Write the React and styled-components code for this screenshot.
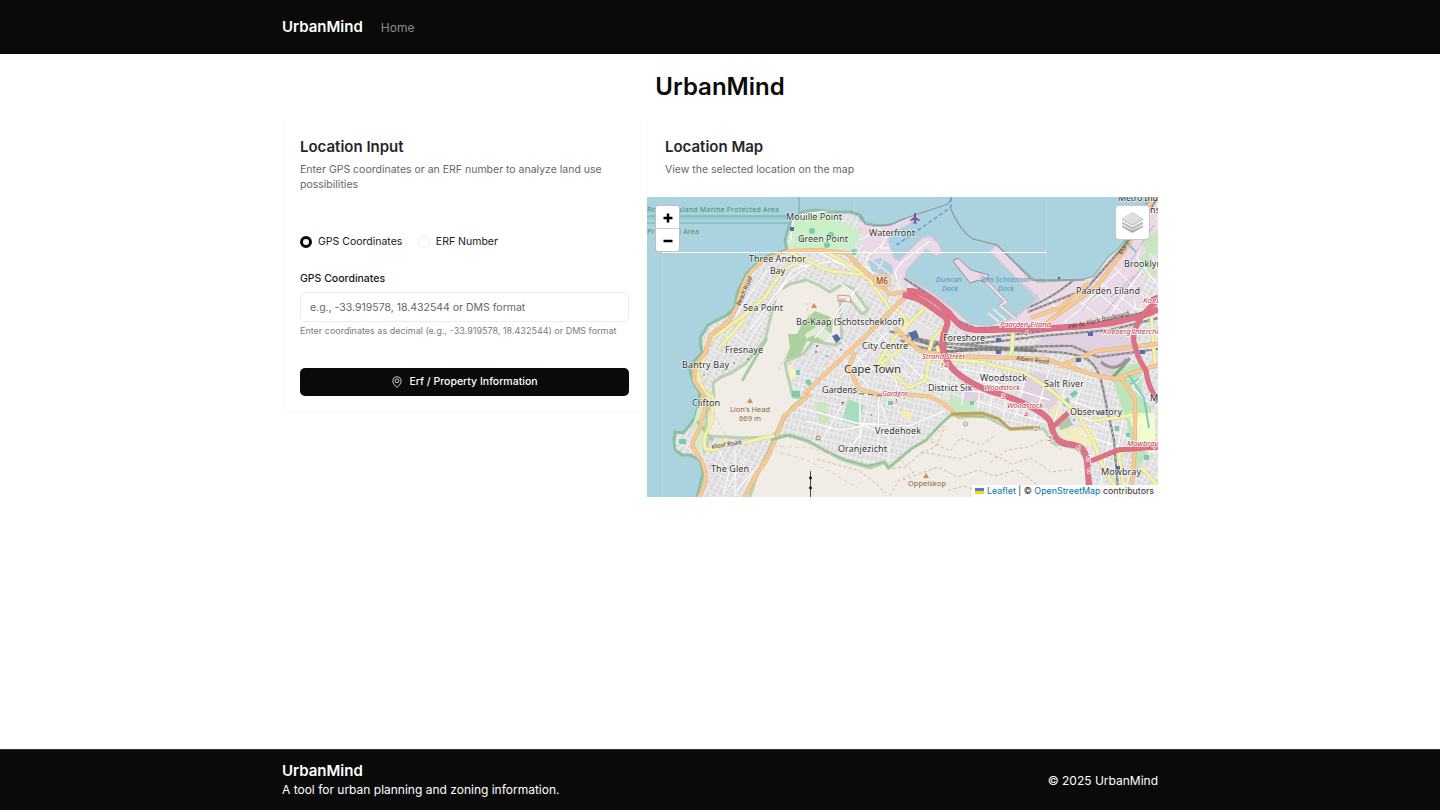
import React from "react";
import styled, { createGlobalStyle } from "styled-components";

const Global = createGlobalStyle`
  * { box-sizing: border-box; }
  body { margin: 0; background: #fff; color: #0a0a0a; font-family: Inter, "Liberation Sans", sans-serif; }
  h1, h2, p { margin: 0; }
`;
const Page = styled.div`
  display: flex;
  flex-direction: column;
  height: 810px;
`;
const Container = styled.div`
  width: 876px;
  margin: 0 auto;
  display: flex;
  align-items: center;
  justify-content: ${(p) => p.$justify || "flex-start"};
`;
const Header = styled.header`
  height: 54px;
  display: flex;
  background: #0a0a0a;
`;
const Brand = styled.div`
  font-size: 15px;
  line-height: 20px;
  font-weight: 600;
  color: #fff;
`;
const NavLink = styled.a`
  margin: 2px 0 0 18px;
  font-size: 12px;
  line-height: 18px;
  color: #8b8b8b;
`;
const Main = styled.main`
  flex: 1;
  width: 876px;
  margin: 0 auto;
  padding-top: 15px;
`;
const PageTitle = styled.h1`
  font-size: 24px;
  line-height: 36px;
  font-weight: 600;
  text-align: center;
  margin-bottom: 14px;
`;
const Columns = styled.div`
  display: grid;
  grid-template-columns: 365px 511px;
  align-items: start;
`;
const Card = styled.section`
  border: ${(p) => (p.$outlined ? "1px solid #fafafa" : "0")};
  border-top-color: #fff;
  border-radius: 8px 0 0 8px;
  height: ${(p) => (p.$outlined ? "294px" : "auto")};
`;
const CardHeader = styled.div`
  padding: ${(p) => (p.$inset ? "16px 17px 0 17px" : "17px 18px 0")};
  height: ${(p) => (p.$inset ? "77px" : "78px")};
`;
const CardTitle = styled.h2`
  font-size: 15px;
  line-height: 22px;
  font-weight: 600;
  color: #262626;
  margin-bottom: 4px;
`;
const CardText = styled.p`
  font-size: 10.5px;
  line-height: 15px;
  color: #666;
`;
const Form = styled.div`
  display: flex;
  flex-direction: column;
  padding: 37px 17px 0 17px;
`;
const Radios = styled.div`
  display: flex;
  gap: 15.5px;
  height: 15px;
`;
const RadioOption = styled.label`
  display: flex;
  align-items: center;
  gap: 6px;
  font-size: 10.5px;
  color: #171717;
`;
const RadioDot = styled.span`
  width: 12px;
  height: 12px;
  border-radius: 50%;
  border: ${(p) => (p.$checked ? "3.5px solid #0a0a0a" : "1px solid #ededed")};
`;
const FieldLabel = styled.label`
  margin-top: 22px;
  font-size: 10.5px;
  line-height: 15px;
  font-weight: 500;
  color: #171717;
`;
const Input = styled.input`
  margin-top: 6px;
  height: 30px;
  padding: 0 9px;
  border: 1px solid #ececec;
  border-radius: 5px;
  outline: 0;
  font: 10.5px Inter, sans-serif;
  &::placeholder { color: #666; opacity: 1; }
`;
const Hint = styled.p`
  margin-top: 3px;
  font-size: 9px;
  line-height: 12px;
  color: #7c7c7c;
  white-space: nowrap;
`;
const Button = styled.button`
  margin-top: 30.5px;
  height: 28px;
  display: flex;
  align-items: center;
  justify-content: center;
  gap: 6px;
  border: 0;
  border-radius: 5px;
  background: #0a0a0a;
  color: #fff;
  font: 500 10.5px Inter, sans-serif;
`;
const MapFrame = styled.div`
  position: relative;
  width: 511px;
  height: 300px;
  overflow: hidden;
`;
const MapDrawing = styled.svg`
  display: block;
  width: 511px;
  height: 300px;
  font-family: "Noto Sans", sans-serif;
`;
const ZoomControl = styled.div`
  position: absolute;
  left: 8px;
  top: 8px;
  width: 25px;
  height: 47px;
  border: 1px solid rgba(0, 0, 0, 0.25);
  border-radius: 3px;
  background: #fff;
  display: flex;
  flex-direction: column;
`;
const ZoomButton = styled.div`
  flex: 1;
  display: flex;
  align-items: center;
  justify-content: center;
  padding-top: 2px;
  & + & { border-top: 1px solid #ccc; }
`;
const LayersControl = styled.div`
  position: absolute;
  right: 8px;
  top: 8px;
  width: 35px;
  height: 35px;
  display: flex;
  align-items: center;
  justify-content: center;
  border: 1px solid rgba(0, 0, 0, 0.22);
  border-radius: 4px;
  background: #fff;
`;
const Attribution = styled.div`
  position: absolute;
  right: 0;
  bottom: 0;
  height: 12px;
  padding: 0 4px 1px 3px;
  display: flex;
  align-items: center;
  background: rgba(255, 255, 255, 0.85);
  color: #333;
  font-size: 8.9px;
  white-space: pre;
  svg { margin-right: 3px; }
  a { color: #0078a8; }
`;
const Footer = styled.footer`
  height: 61px;
  display: flex;
  border-top: 1px solid #333;
  background: #0a0a0a;
  color: #fff;
  font-size: 12px;
`;
const FooterText = styled.p`
  line-height: 18px;
  padding-top: ${(p) => (p.$lowered ? "2px" : "0")};
`;

const COAST =
  "M697 505L697 497 703 473 700 460 690 455 682 455 675 450 674 441 675 432 683 433 690 425 695 417 698 407 700 393 693 382 690 370 695 360 702 353 700 338 708 325 727 315 735 308 737 293 747 273 763 258 787 250 785 240 790 223 802 212 815 210 830 212 850 212 859 215 863 222 873 225 885 226 893 224 905 219 917 217 906 225 893 232 887 240 893 258 899 262 911 250 922 239 930 237 938 244 941 253 937 255 926 248 906 269 904 277 913 283 930 292 957 313 970 325 988 327 1015 319 1038 299 991 251 997 246 1017 265 1035 281 1060 281 1083 280 1094 277 1108 258 1120 248 1128 238 1136 224 1147 203 1150 197 1150 190H1166V505Z";
const HARBOUR_EDGE =
  "M905 219L917 217 906 225 893 232 887 240 893 258 899 262 911 250 922 239 930 237 938 244 941 253 937 255 926 248 906 269 904 277 913 283 930 292 957 313 970 325 988 327 1015 319 1038 299 991 251 997 246";

const HILLS = [
  "M770 320L777 292 790 284 807 280 820 286 830 292 843 284 853 289 868 310 862 314 850 300 840 300 842 342 835 345 813 341 803 354 785 362 787 373 793 397 804 398 792 407 781 424 773 437 743 438 710 436 704 451 707 412 714 398 713 383 721 377 731 373 745 364 765 340Z",
  "M774 438L785 435 804 440 822 449 840 459 870 468 885 462 889 468 911 449 925 441 941 424 952 414 971 414 984 416 1010 429 1044 429 1053 443 1079 449 1087 463 1087 505H747L756 478Z",
];
const FOREST = "M797 334L803 322 815 311 833 318 832 332 822 343 807 341 800 355 785 360 790 347 788 334Z";

const PARKS = [
  ["#caf0c6", "M793 221L808 213 827 213 845 224 861 234 854 249 821 250 790 248Z"],
  ["#a6dfbf", "M848 399L864 405 858 426 842 421Z"],
  ["#f5f3c4", "M782 363L793 367 797 377 789 380Z"],
  ["#c8e8c4", "M950 393L971 403 979 415 960 414 950 407Z"],
  ["#bee5ba", "M1110 370L1142 362 1142 399 1151 406 1151 448 1136 471 1130 447 1127 421 1113 382Z"],
  ["#f3ffc9", "M1128 413L1155 413 1155 454 1140 450Z"],
  ["#f2eec2", "M1056 431L1079 427 1091 428 1100 441 1091 447 1070 441Z"],
  ["#efe8ba", "M1051 407L1060 404 1061 418 1050 420Z"],
  ["#b2c7a9", "M1058 425L1068 416 1073 425 1061 430Z"],
  ["#c9e6bd", "M815 403L826 402 829 421 820 427Z"],
  ["#f7ecb5", "M904 410L913 413 909 421 900 415Z"],
  ["#f7ecb5", "M1071 452L1080 454 1084 462 1078 464Z"],
  ["#c8e7be", "M1142 241L1158 230V255L1148 252 1158 278 1145 274 1137 262 1146 251Z"],
  ["#d9eac8", "M696 408L709 408 708 437 698 453 692 437Z"],
];

const MINOR =
  "M750 330L793 270 820 260 M745 349L785 283 809 265 M736 315L767 270 M732 330L746 344 M777 258L804 266 834 261 865 274 M820 253L868 276 874 290 M858 214L888 235 881 246 867 257 866 266 878 279 M880 248L900 248 M861 240L881 226 M900 290L895 272 902 262 930 241 M857 288L815 338 M839 282L854 293 836 320 M840 339L865 365 895 378 900 397 M834 347L868 386 866 405 M871 337L911 380 M875 329L935 391 M850 353L881 323 M840 378L892 328 M891 307L938 333 M860 391L860 448 M879 391L878 445 M798 407L856 423 909 426 944 411 M806 421L840 430 866 426 888 436 M822 440L846 398 M889 462L889 430 881 403 M850 449L861 433 865 418 M922 375L961 390 988 393 1020 404 M939 366L1017 378 M950 347L944 392 M967 351L962 405 M983 357L978 408 M998 359L989 417 M1010 361L1003 421 M1030 359L1015 418 M1050 367L1034 421 M1070 372L1053 425 M1086 377L1075 405 M962 378L1005 386 1050 400 M976 401L1020 415 1047 423 M1056 395L1112 416 M1080 416L1130 439 M1080 433L1133 452 M1094 452L1080 493 M1110 433L1100 488 M1124 415L1114 469 M1141 424L1129 479 M1143 376L1132 387 1148 402 M1046 291L1049 298 1055 307 1075 299 1109 288 M1077 300L1112 326 M1092 288L1124 314 M1095 278L1137 310 M1110 263L1146 299 M1141 245L1137 258 1158 286 M1134 299L1136 309 1151 309 M1083 304L1121 269 M1111 314L1143 269 M1062 324L1105 290 M719 450L729 473 723 495 M735 450L735 496 M746 458L728 487 M758 466L736 491 M792 223L796 216 840 209 M790 245L793 223";

const TRUNK = [
  "M907 291C924 290 937 302 949 313C959 325 962 330 980 330C1018 329 1076 329 1111 323C1132 318 1144 317 1158 309",
  "M903 295C925 298 932 309 944 316C952 323 944 328 943 338C941 353 947 364 956 372C965 380 985 391 1000 394C1023 402 1042 411 1050 421C1053 431 1053 441 1067 444C1081 445 1085 449 1087 460L1089 485",
];
const TRUNK_LINKS = "M1156 302C1140 314 1130 333 1135 346C1138 361 1144 366 1146 371C1148 386 1152 390 1158 402 M1091 461L1118 450 1158 447 M1054 426L1068 413 M1151 300L1158 297";
const PRIMARY = [
  "M696 502C714 474 703 465 694 449C688 440 703 431 701 421C706 410 708 395 698 388C691 381 693 367 705 353L711 335 728 322 735 310 742 289C747 270 766 254 787 251L820 250 847 253 861 268 890 294 908 292",
  "M804 394L858 343 875 327 894 308 907 295 M810 394L784 416 776 438 767 459 756 475 742 502",
  "M855 352L849 367 859 389 878 395 905 395 929 396 944 404 959 417 979 414",
  "M895 328L920 351 935 354 980 357 1045 359 1101 377 1122 379 1135 400 1135 450 1130 502 M1060 366L1097 351 1164 343 M1112 380L1142 370 1158 365",
  "M1043 326L1061 312 1096 287 1127 247 1158 190 M1031 318L1061 307 1089 283",
];
const SECONDARY = [
  "M712 338L742 317 765 297 783 270 806 258 M719 348L745 319 M790 253L830 271 864 275",
  "M825 251L865 274 877 290 890 309 M926 307L895 337 877 365",
  "M706 355L697 371 704 392 713 397 712 421 704 438 705 449 716 450 727 438 M744 443L763 438 776 436",
  "M899 311L906 320 905 331 M949 323L933 338 929 351 M929 358L926 380 909 388 882 363 901 349 917 331 M1013 331L1012 350 1009 358",
  "M937 346L943 366 M928 358L980 362 1025 373 1052 391 1078 414 1094 443 1104 470 1126 502",
  "M1092 421L1140 414 M1151 312L1155 364 M1135 449L1119 454 1126 502 M1141 467L1158 486",
];
const RAIL =
  "M894 333C939 353 993 349 1038 351S1093 356 1101 380L1114 440 1119 502 M889 331C943 349 994 345 1037 350 M900 335C950 354 1011 338 1052 335L1110 330 1158 318 M900 340C946 362 989 344 1074 346 M980 338L1075 328 1158 309 M1024 309C1055 299 1081 275 1110 247L1146 203 M1028 312L1086 289 1133 236 1158 197 M1072 346L1098 357 1158 349 M904 278L935 299 956 320 975 328 1030 326";

const LABELS = [
  ["Mouille Point", 786, 220, 56], ["Green Point", 798, 242, 50], ["Three Anchor", 749, 262, 57], ["Bay", 770, 274, 15],
  ["Sea Point", 743, 311, 40], ["Bo-Kaap (Schotschekloof)", 796, 325, 108], ["City Centre", 862, 349, 46],
  ["Waterfront", 869, 236, 46], ["Foreshore", 943, 341, 42], ["Fresnaye", 725, 353, 38], ["Bantry Bay", 682, 368, 47],
  ["Clifton", 692, 406, 28], ["Cape Town", 844, 373, 57, 11.5], ["Gardens", 822, 393, 35], ["District Six", 928, 391, 44],
  ["Woodstock", 980, 381, 47], ["Salt River", 1044, 387, 40], ["Observatory", 1070, 415, 52], ["Vredehoek", 875, 434, 46],
  ["Oranjezicht", 838, 452, 49], ["The Glen", 711, 472, 38], ["Mowbray", 1101, 475, 40], ["Paarden Eiland", 1076, 294, 64],
  ["Brooklyn", 1124, 267, 38], ["Metro Ind", 1118, 201, 40], ["tions", 1139, 213, 21], ["Ma", 1150, 401, 15],
];
const TINTED = [
  ["Robben Island Marine Protected Area", 647, 212, 132, "#39965f", 7], ["Protected Area", 647, 234, 52, "#39965f", 7],
  ["Lion's Head", 730, 412, 40, "#8b6745", 7.5], ["669 m", 739, 421, 22, "#8b6745", 7.5], ["Oppelskop", 908, 486, 38, "#8b6745", 7.5],
];
const ITALIC = [
  ["Duncan", 936, 282, 26, "#5d91ba"], ["Dock", 942, 291, 16, "#5d91ba"], ["Ben Schoeman", 981, 282, 49, "#5d91ba"], ["Dock", 998, 291, 16, "#5d91ba"],
  ["Strand Street", 922, 359, 43], ["14", 940, 368, 8], ["Gardens", 882, 396, 26], ["1", 894, 404, 4], ["Woodstock", 984, 390, 36],
  ["3", 1001, 399, 4], ["Woodstock", 1007, 408, 36], ["4", 1024, 417, 4], ["5", 1034, 431, 4], ["5", 1048, 441, 4], ["6", 1076, 451, 4], ["6", 1086, 461, 4], ["6", 1087, 473, 4],
  ["Paarden Eiland", 1000, 327, 51], ["4", 1024, 336, 4], ["Koeberg Interchange", 1103, 334, 70], ["Koeberg", 1143, 303, 30], ["Mowbray", 1127, 446, 31],
];

function Roads({ routes, casing, color, width }) {
  return (
    <>
      <path d={routes.join(" ")} stroke={casing} strokeWidth={width + 1} fill="none" />
      <path d={routes.join(" ")} stroke={color} strokeWidth={width} fill="none" />
    </>
  );
}

function CityMap() {
  return (
    <MapDrawing viewBox="647 197 511 300" aria-label="Map of Cape Town">
      <defs>
        <clipPath id="land"><path d={COAST} /></clipPath>
        <pattern id="streets" width="11" height="9" patternUnits="userSpaceOnUse" patternTransform="rotate(28)">
          <rect width="11" height="9" fill="#dddbdc" />
          <path d="M0 1H11M0 5H7M2 0V9M7 1V9" stroke="#f4f3f3" strokeWidth="1" />
          <path d="M4 3h2M9 7h1" stroke="#c6c2c4" strokeWidth=".8" />
        </pattern>
        <pattern id="streetsSouth" width="9" height="12" patternUnits="userSpaceOnUse" patternTransform="rotate(13)">
          <rect width="9" height="12" fill="#dddcdc" />
          <path d="M0 2H9M2 7H9M1 0V12M5 2V12" stroke="#f6f5f5" strokeWidth="1" />
          <path d="M7 4v1M3 9v1" stroke="#c6c2c4" />
        </pattern>
      </defs>
      <rect x="647" y="197" width="511" height="300" fill="#aad3df" />
      <g stroke="#7cbcb6" fill="none" strokeWidth="1.5">
        <path d="M799 197V216M647 216H788M647 223H789" />
        <path d="M647 218H788" strokeWidth="3" opacity=".4" />
      </g>
      <path d={COAST} fill="url(#streets)" stroke="#8abfa8" strokeWidth="3" />
      <path d={HARBOUR_EDGE} fill="none" stroke="#dccbdb" strokeWidth="3" />
      <g clipPath="url(#land)" strokeLinejoin="round">
        <path d="M790 373L950 340 1040 360 1140 390 1140 497H780V395Z" fill="url(#streetsSouth)" />
        <path d="M861 214L917 215 945 235 945 257 909 280 960 313 985 326 1045 300 982 253 995 242 1037 283 1084 280 1120 245 1152 197 1158 233 1135 263 1145 303 1100 326 1041 336 972 343 917 290 885 271 863 245Z" fill="#ebd9e7" />
        <path d="M911 318L942 331 940 350 895 347 888 333ZM970 334L1012 332 1010 347 960 347Z" fill="#e8e3e2" />
        <path d="M1034 349L1044 336 1110 327 1140 325 1134 344 1120 376 1104 378 1092 360 1060 353 1040 355ZM960 377L985 388 979 404 963 400ZM1030 372L1048 374 1060 397 1051 410 1020 399ZM1080 425L1095 436 1085 443Z" fill="#e0d0e0" />
        <path d="M868 261L881 258 892 265 893 274 880 274 872 271ZM894 249L904 247 899 261ZM897 237L911 226 921 238 905 249Z" fill="#aad3df" />
        <path d="M869 258L890 274M884 258L878 270" stroke="#ebd9e7" strokeWidth="2" />
        {PARKS.map(([color, d]) => <path key={d} d={d} fill={color} />)}
        {HILLS.map((d) => <path key={d} d={d} fill="#f1ece6" stroke="#b7d2b0" strokeWidth="3" />)}
        <path d={FOREST} fill="#add19e" />
        <path d="M805 334L820 324 832 335 823 341 814 335 806 339Z" fill="#e1ead6" />
        <path d="M767 338L742 381M697 421L713 441" fill="none" stroke="#a8cda3" strokeWidth="3" />
        <path d={MINOR} fill="none" stroke="#cecbcc" strokeWidth="2" />
        <path d={MINOR} fill="none" stroke="#fff" strokeWidth="1.4" />
        <g fill="#7bcab0"><circle cx="802" cy="239" r="3" /><circle cx="812" cy="231" r="3" /><circle cx="831" cy="235" r="3" /><circle cx="827" cy="245" r="3" /><circle cx="854" cy="252" r="3" /><path d="M796 370h4v5h-4zM792 391h8v6h-8zM805 381l4-2 3 5-4 2zM1070 394l5-4 3 3-5 5zM1062 402l6-5 2 5-6 5zM970 401h4v4h-4zM888 401h5v4h-5zM679 439h7v5h-7zM1115 426h4v5h-4zM1126 433h4v4h-4zM1144 455h5v5h-5z" /></g>
        <g stroke="#858384" fill="none"><path d={RAIL} strokeWidth="2.2" /><path d={RAIL} stroke="#ddd" strokeWidth=".8" strokeDasharray="2 3" /></g>
        <path d="M908 333Q930 347 950 352Q984 345 1036 351M1101 362Q1115 374 1127 359M1112 378Q1122 368 1130 358" stroke="#777" strokeWidth="3" fill="none" opacity=".65" />
        <Roads routes={SECONDARY} casing="#d2ce91" color="#f4f3ad" width={3} />
        <Roads routes={PRIMARY} casing="#dcae80" color="#f6ca91" width={3.2} />
        <Roads routes={TRUNK} casing="#c9667a" color="#df7187" width={5} />
        <Roads routes={[TRUNK_LINKS]} casing="#c9667a" color="#df7187" width={4} />
        <g fill="none" stroke="#b99b78" strokeWidth=".6" strokeDasharray="3 2.5">
          <path d="M817 459L838 465 858 470 874 482 886 493M887 469L905 467 920 454 935 447 946 426M897 457L914 472 899 480 889 497M921 452L961 459 983 450 1012 464 1031 458 1051 472 1075 469M944 426L930 441 950 451 960 438 981 445 996 435M903 480L938 467 958 477 978 470 994 476 1017 470 1039 486M991 462L1007 450 1029 447 1045 439 1063 451M948 490L965 486 981 493" />
          <path d="M775 300L768 318M806 303L812 330M710 408L731 444M778 370L785 358" stroke="#edab99" />
        </g>
        <path d="M780 453L804 459 829 471 858 488M774 446L811 448 845 459" fill="none" stroke="#ebc9ba" strokeDasharray="4 3" />
        <path d="M771 440L790 435 809 441 826 451 846 460 868 466 884 462 888 468 911 449 926 440 941 424 951 415 985 417" stroke="#9bc59b" strokeWidth="2.4" fill="none" />
        <path d="M951 414L982 413 999 419 1010 429 1040 427" stroke="#bfa35d" strokeWidth="3" fill="none" />
        <path d="M850 393L878 395 905 397" stroke="#6d6868" strokeWidth="1" strokeDasharray="5 4" fill="none" />
        <path d="M1129 375L1144 398 1149 428M1139 379L1130 384M1123 239L1136 252" stroke="#82c6cc" strokeWidth="2" fill="none" />
      </g>
      <g fill="none">
        <path d="M850 211L861 215 865 224 876 226 890 225 904 219 918 214 948 204 952 197M950 207Q960 231 973 239L997 245 1032 280H1084" stroke="#929aa0" strokeWidth="1.3" />
        <path d="M951 198V207L927 224 895 246" stroke="#7399d0" strokeDasharray="4 2.5" strokeWidth="1.6" />
        <path d="M953 261L958 258 971 270 989 275 985 282 979 280 970 283Z" fill="#ebd9e7" stroke="#909198" />
        <path d="M980 275L1006 302 1000 306 1016 319" stroke="#a9a2ac" strokeWidth="3.5" />
        <path d="M980 275L1006 302 1000 306 1016 319" stroke="#eddfe9" strokeWidth="2.5" />
        <path d="M993 309L1006 320M988 313L999 322" stroke="#e9e6ec" strokeWidth="2" />
        <path d="M1111 297L1134 276M1105 313L1146 263M1082 310L1100 290M1127 267L1154 225" stroke="#9f89ca" strokeWidth=".8" strokeDasharray="2 1" />
        <path d="M662 252.5H1046" stroke="#fff" strokeWidth="1" />
        <path d="M662.5 252V497M854.5 197V252M1046.5 197V297" stroke="#c7e1e9" strokeWidth=".5" />
      </g>
      <path d="M914 213h2v4l4 3v1l-4-1v2l1.500 1.500h-5L914 222v-2l-4 1v-1l4-3Z" fill="#7952a4" />
      <path d="M750 398l3 5h-6zM814 303l3 5h-6zM926 473l3 5h-6z" fill="#d08f55" />
      <g fill="#536da8"><path d="M832 336l5-2 4 5-5 4zM790 227h4v4h-4zM909 333l7-3 3 7-7 4zM996 338h5v4h-5zM996 350h5v4h-5zM1076 358h5v4h-5zM1088 332h5v4h-5zM1097 411h7v4h-7zM1140 350h5v4h-5zM1116 466h4v4h-4z" /></g>
      <g fill="#756473"><circle cx="734" cy="363" r=".8" /><circle cx="748" cy="359" r=".8" /><circle cx="704" cy="375" r=".8" /><circle cx="827" cy="356" r=".8" /><circle cx="817" cy="346" r="1" /><circle cx="816" cy="352" r="1" /><circle cx="871" cy="415" r=".8" /><circle cx="841" cy="350" r=".8" /><circle cx="965" cy="383" r=".8" /><circle cx="1074" cy="420" r=".8" /><circle cx="1059" cy="278" r="1.300" /></g>
      <path d="M838 295l12 1 1 6-13-1z" fill="none" stroke="#e48f7d" />
      <path d="M841 403l3-1-2 3" fill="none" stroke="#92684d" />
      <path d="M810.500 471V497" stroke="#222" strokeWidth=".8" /><circle cx="810.500" cy="478" r="1.400" /><circle cx="810.500" cy="488" r="1.400" />
      <circle cx="965.500" cy="424" r="2" fill="none" stroke="#999" /><circle cx="818" cy="438" r="2" fill="none" stroke="#9a8445" />
      <rect x="874" y="275" width="16" height="11" fill="#f8d7b5" stroke="#dfaa79" strokeWidth=".7" />
      <text x="876" y="284" fontSize="8" fill="#744221">M6</text>
      <g fontSize="9" fill="#333" stroke="#fff" strokeOpacity=".65" strokeWidth="1.5" strokeLinejoin="round" paintOrder="stroke">
        {LABELS.map(([name, x, y, width, size]) => <text key={name} x={x} y={y} textLength={width} fontSize={size || 9}>{name}</text>)}
      </g>
      {TINTED.map(([name, x, y, width, color, size]) => <text key={name} x={x} y={y} textLength={width} fill={color} fontSize={size}>{name}</text>)}
      {ITALIC.map(([name, x, y, width, color]) => <text key={name + x + y} x={x} y={y} textLength={width} lengthAdjust="spacingAndGlyphs" fill={color || "#b83242"} stroke={color ? "none" : "#fff"} strokeWidth="1.3" paintOrder="stroke" fontSize="7" fontStyle="italic">{name}</text>)}
      <g fill="#4a3a29" fontSize="6">
        <text transform="translate(740 306) rotate(-66)" textLength="31">Beach Road</text>
        <text transform="translate(712 449) rotate(-10)" textLength="30">Kloof Road</text>
        <text transform="translate(1016 360) rotate(7)" textLength="33">Albert Road</text>
        <text transform="translate(1069 329) rotate(-13)" textLength="62">FW de Klerk Boulevard</text>
        <text transform="translate(1122 255) rotate(-61)" textLength="29">Marine Dr</text>
      </g>
    </MapDrawing>
  );
}

const PinIcon = () => (
  <svg width="12" height="12" viewBox="0 0 15 15" fill="none" stroke="currentColor">
    <path d="M7.500 1C4.400 1 2.300 3.200 2.300 6.100C2.300 9.300 5.300 12.500 7.500 14.200C9.700 12.500 12.700 9.300 12.700 6.100C12.700 3.200 10.600 1 7.500 1Z" />
    <circle cx="7.500" cy="6" r="2.300" />
  </svg>
);
const LayersIcon = () => (
  <svg width="21" height="21" viewBox="0 0 21 21">
    <path d="M0 13.500L10.500 18.500 21 13.500V15L10.500 21 0 15Z" fill="#a8a8a8" />
    <path d="M0 9.500L10.500 15 21 9.500V12L10.500 18 0 12Z" fill="#bcbcbc" />
    <path d="M10.500 0L21 6.500V8L10.500 14 0 8V6.500Z" fill="#c6c6c6" />
    <path d="M10.500 0L21 6.500 10.500 12.500 0 6.500Z" fill="#dedede" />
  </svg>
);

export default function App() {
  return (
    <Page>
      <Global />
      <Header><Container><Brand>UrbanMind</Brand><NavLink>Home</NavLink></Container></Header>
      <Main>
        <PageTitle>UrbanMind</PageTitle>
        <Columns>
          <Card $outlined>
            <CardHeader $inset>
              <CardTitle>Location Input</CardTitle>
              <CardText>Enter GPS coordinates or an ERF number to analyze land use possibilities</CardText>
            </CardHeader>
            <Form>
              <Radios>
                <RadioOption><RadioDot $checked />GPS Coordinates</RadioOption>
                <RadioOption><RadioDot />ERF Number</RadioOption>
              </Radios>
              <FieldLabel>GPS Coordinates</FieldLabel>
              <Input placeholder="e.g., -33.919578, 18.432544 or DMS format" />
              <Hint>Enter coordinates as decimal (e.g., -33.919578, 18.432544) or DMS format</Hint>
              <Button><PinIcon />Erf / Property Information</Button>
            </Form>
          </Card>
          <Card>
            <CardHeader>
              <CardTitle>Location Map</CardTitle>
              <CardText>View the selected location on the map</CardText>
            </CardHeader>
            <MapFrame>
              <CityMap />
              <ZoomControl>
                <ZoomButton><svg width="10" height="10"><path d="M5 0.500V9.500M0.500 5H9.500" stroke="#000" strokeWidth="2.500" /></svg></ZoomButton>
                <ZoomButton><svg width="10" height="10"><path d="M0.500 5H9.500" stroke="#000" strokeWidth="2.500" /></svg></ZoomButton>
              </ZoomControl>
              <LayersControl><LayersIcon /></LayersControl>
              <Attribution>
                <svg width="9" height="6"><path fill="#4c7be1" d="M0 0h9v3H0z" /><path fill="#ffd500" d="M0 3h9v3H0z" /></svg>
                <a>Leaflet</a>{" | © "}<a>OpenStreetMap</a>{" contributors"}
              </Attribution>
            </MapFrame>
          </Card>
        </Columns>
      </Main>
      <Footer>
        <Container $justify="space-between">
          <div><Brand>UrbanMind</Brand><FooterText>A tool for urban planning and zoning information.</FooterText></div>
          <FooterText $lowered>© 2025 UrbanMind</FooterText>
        </Container>
      </Footer>
    </Page>
  );
}
